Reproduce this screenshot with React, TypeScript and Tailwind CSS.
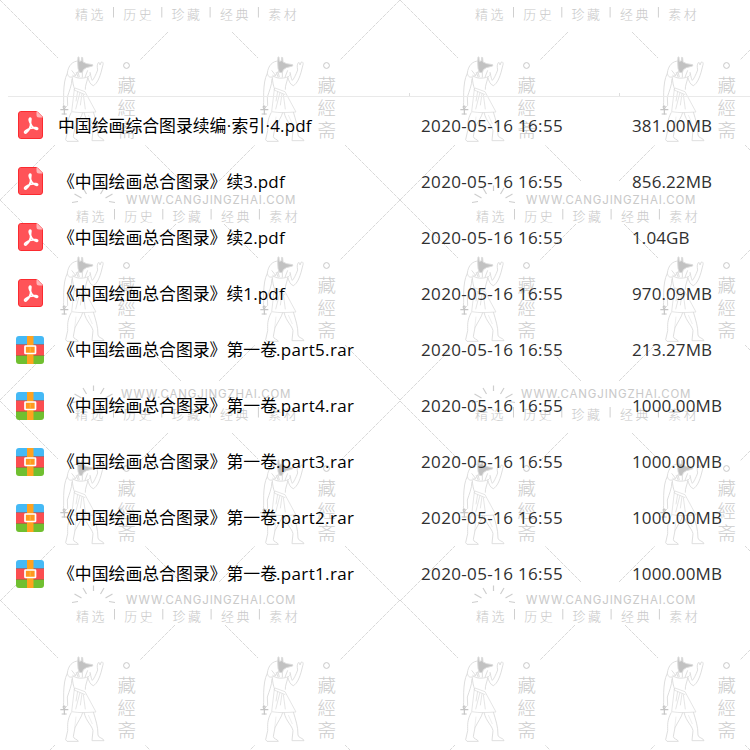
import React from "react";

type FileKind = "pdf" | "rar";

interface FileRow {
  kind: FileKind;
  title: string;
  suffix: string;
  date: string;
  size: string;
}

const DATE = "2020-05-16 16:55";

const files: FileRow[] = [
  { kind: "pdf", title: "中国绘画综合图录续编·索引·", suffix: "4.pdf", date: DATE, size: "381.00MB" },
  { kind: "pdf", title: "《中国绘画总合图录》续", suffix: "3.pdf", date: DATE, size: "856.22MB" },
  { kind: "pdf", title: "《中国绘画总合图录》续", suffix: "2.pdf", date: DATE, size: "1.04GB" },
  { kind: "pdf", title: "《中国绘画总合图录》续", suffix: "1.pdf", date: DATE, size: "970.09MB" },
  { kind: "rar", title: "《中国绘画总合图录》第一卷", suffix: ".part5.rar", date: DATE, size: "213.27MB" },
  { kind: "rar", title: "《中国绘画总合图录》第一卷", suffix: ".part4.rar", date: DATE, size: "1000.00MB" },
  { kind: "rar", title: "《中国绘画总合图录》第一卷", suffix: ".part3.rar", date: DATE, size: "1000.00MB" },
  { kind: "rar", title: "《中国绘画总合图录》第一卷", suffix: ".part2.rar", date: DATE, size: "1000.00MB" },
  { kind: "rar", title: "《中国绘画总合图录》第一卷", suffix: ".part1.rar", date: DATE, size: "1000.00MB" },
];

function PdfIcon() {
  return (
    <svg className="mb-[2px]" width="28" height="28" viewBox="0 0 28 28">
      <path d="M4.500.5H21L26.500 6v19a2.500 2.500 0 0 1-2.500 2.500H4.500A2.500 2.500 0 0 1 2.500 25V3A2.500 2.500 0 0 1 4.500.5Z" fill="#ff5358" stroke="#fb2b30" />
      <path d="M20.500 0l6.500 6.500h-4A2.500 2.500 0 0 1 20.500 4Z" fill="#ffb5b8" />
      <path
        d="M14.300 7.200c-1.800 0-.9 3.300.3 5.200.6 2.800-1.700 7-4.300 9.300-1.600 1-2.400-.5-.9-1.800 2.900-2.200 7.200-3.600 10.700-3.300 2.300.3 1.800 2 .1 1.600-2.400-.7-4.900-3.300-5.600-5.600-.5-2.300 1-5.300-.3-5.400Z"
        fill="none" stroke="#fff" strokeWidth="1.800" strokeLinejoin="round"
      />
    </svg>
  );
}

function RarIcon() {
  return (
    <svg width="28" height="28" viewBox="0 0 28 28">
      <path d="M3 0h22a3 3 0 0 1 3 3v6H0V3a3 3 0 0 1 3-3Z" fill="#45b9f5" />
      <path d="M0 8.500h28V20H0Z" fill="#fb4d50" />
      <path d="M0 19.500h28V25a3 3 0 0 1-3 3H3a3 3 0 0 1-3-3Z" fill="#70bf30" />
      <path d="M0 8.500h28M0 19.500h28" stroke="#8b4a35" strokeOpacity=".35" />
      <path d="M11 0h6.500v28H11Z" fill="#ffa21f" />
      <rect x="9" y="10" width="10.500" height="7.500" rx=".5" fill="#ff9820" stroke="#fff" strokeWidth="1.700" />
      <path d="M14.200 11.500v4.500" stroke="#f9bd36" />
    </svg>
  );
}

function Figure() {
  return (
    <g transform="translate(40 40) scale(.33333)" fill="none" stroke="#dcdcdc" strokeWidth="2.800" strokeLinejoin="round">
      <path d="M118 63C98 62 84 77 82 100c3 12 8 13 18 10 10-4 12-14 17-18M95 91l13 17M150 96c3 12-5 16-20 18-14 2-26-1-33-9M108 96l7 16M143 91l-8 21M114 95l4 16M127 99v13" />
      <path d="M82 100c-8 16-10 34-11 58v29c-2 8 0 14 5 16l7-7-1-25c6-19 13-33 14-55M97 112c1 16 3 25 7 36M143 114c-2 13-8 23-7 35" />
      <path d="M151 100c2 10 2 14 6 21 4-4 10-15 16-31-2-10-2-16 2-22 4-2 4 3 5 7l4-9c5-2 7 5 4 12l-3 12c-6 24-14 41-25 47-9-3-14-14-17-27" />
      <path d="M103 148l-8 67c25 5 49 2 73 1l-33-61-30-11-3 6 34 14M120 157l-13 51M126 160l-5 36M130 163l6 45M113 154l-5 30" strokeWidth="2.200" />
      <path d="M94 217c-13 24-11 39-11 55l-6 27 4 5h34c-2-7-15-6-15-15l5-26c10-20 20-32 23-46M132 217c7 29 24 39 27 55l-3 30h36c-1-8-18-8-18-17 0-27-7-45-14-69" />
      <path d="M108 230l-4 35M145 225l12 27" strokeWidth="1.500" />
      <path d="M72 207c-9-12 10-12 1 0v17M61 209h24M65 222h15" stroke="#c4c4c4" strokeWidth="3.500" />
      <path d="M114 51h3l1 13 6-1 1-11 3 1 1 13 11 5 18 3v4l-19 5-9 6-3 9-9-1-4-12-1-20Z" fill="#c2c2c2" />
    </g>
  );
}

const cellTops = [0, 200, 403, 600];
const diagonalTops = [0, 200, 401, 600];
const upperGaps = [32, 24, 32, 25];

function Cell({ column, row }: { column: number; row: number }) {
  const x = column * 200;
  const even = column % 2 === 0;
  const gap = upperGaps[row];
  const tl = even ? 0 : gap;
  const tr = even ? gap : 0;
  const bl = even ? 0 : 19;
  const br = even ? 19 : 0;
  return (
    <>
      <g transform={`translate(${x} ${diagonalTops[row]})`} stroke="#cfcfcf" strokeWidth=".8" strokeDasharray="4 1">
        <path d={`M${tl} ${tl}L58 58M${200 - tr} ${tr}L140 60M${bl} ${200 - bl}L55 145M${200 - br} ${200 - br}L145 145`} />
      </g>
      <g transform={`translate(${x} ${cellTops[row]})`}>
        <Figure />
        <circle cx="126.500" cy="65.500" r="2.900" fill="none" stroke="#c8c8c8" />
        <g fill="#cdcdcd" fontSize="18.500" fontWeight="300">
          <text x="117.500" y="92">藏</text>
          <text x="117.500" y="115">經</text>
          <text x="117.500" y="137">斋</text>
        </g>
      </g>
    </>
  );
}

const banners = [
  { x: 75, y: 14, site: null, siteX: 0, sun: 0 },
  { x: 76, y: 216, site: 203.5, siteX: 126, sun: 203 },
  { x: 75, y: 414, site: 398, siteX: 121, sun: 403 },
  { x: 76, y: 616, site: 603.5, siteX: 126, sun: 603 },
];
const words = ["精选", "历史", "珍藏", "经典", "素材"];

function Banner({ index, offset }: { index: number; offset: number }) {
  const b = banners[index];
  return (
    <g transform={`translate(${offset} 0)`} fill="#c9c9c9">
      {words.map((word, i) => (
        <g key={word}>
          <text x={b.x + i * 48.3} y={b.y + 5} fontSize="13" fontWeight="300" letterSpacing="2.500">{word}</text>
          {i < 4 && <path d={`M${b.x + 38.5 + i * 48.3} ${b.y - 7}v10.500`} stroke="#cfcfcf" />}
        </g>
      ))}
      {b.site !== null && (
        <>
          <text x={b.siteX} y={b.site} fontSize="11.500" textLength="169.500" fontFamily="Inter, Liberation Sans, sans-serif">WWW.CANGJINGZHAI.COM</text>
          <path
            transform={`translate(93.500 ${b.sun})`}
            d="M-21.500-.5l6-1M-19-9l7 4M-10.500-15l3.500 6M0-17.500v5.500M10.500-15L7-9M19-9l-7 4M21.500-.5l-6-1"
            fill="none" stroke="#cecece" strokeWidth="1.200"
          />
        </>
      )}
    </g>
  );
}

function Watermark() {
  return (
    <svg className="pointer-events-none absolute inset-0 font-['Noto_Sans_CJK_SC',sans-serif]" width="750" height="750" viewBox="0 0 750 750">
      {cellTops.map((_, row) =>
        [0, 1, 2, 3].map((column) => <Cell key={`${row}-${column}`} row={row} column={column} />),
      )}
      {banners.map((_, i) => (
        <React.Fragment key={i}>
          <Banner index={i} offset={0} />
          <Banner index={i} offset={400} />
        </React.Fragment>
      ))}
    </svg>
  );
}

// Middle dots get a narrow advance instead of the full-width CJK one.
function Title({ text }: { text: string }) {
  return (
    <span className="font-['Noto_Sans_CJK_SC',sans-serif] text-[16.850px]">
      {text.split("·").map((part, i) => (
        <React.Fragment key={i}>
          {i > 0 && <span className="inline-block w-[5px] text-center font-['Open_Sans',sans-serif] leading-none">·</span>}
          {part}
        </React.Fragment>
      ))}
    </span>
  );
}

export default function App() {
  return (
    <div className="relative h-[750px] w-[750px] overflow-hidden bg-white font-['Open_Sans','Noto_Sans_CJK_SC',sans-serif]">
      <Watermark />
      <main className="relative pt-[93px]">
        <div className="ml-2 flex h-1 items-start border-b border-[#e9e9e9]">
          <span className="ml-[401px] h-[3px] w-px bg-[#dedede]" />
          <span className="ml-[209px] h-[3px] w-px bg-[#dedede]" />
        </div>
        <ul className="pt-px">
          {files.map((file) => (
            <li key={file.title + file.suffix} className="flex h-14 items-center pl-4 text-[17px] leading-6">
              <span className="flex w-[42px] shrink-0">{file.kind === "pdf" ? <PdfIcon /> : <RarIcon />}</span>
              <span className="flex w-[363px] shrink-0 items-baseline whitespace-nowrap pb-px text-black">
                <Title text={file.title} />
                <span className={file.kind === "pdf" ? "tracking-[0.150px]" : "-ml-px tracking-[0.350px]"}>{file.suffix}</span>
              </span>
              <span className="w-[211px] shrink-0 whitespace-nowrap tracking-[0.350px] text-[#303030]">{file.date}</span>
              <span className="whitespace-nowrap tracking-[0.100px] text-[#303030]">{file.size}</span>
            </li>
          ))}
        </ul>
      </main>
    </div>
  );
}
